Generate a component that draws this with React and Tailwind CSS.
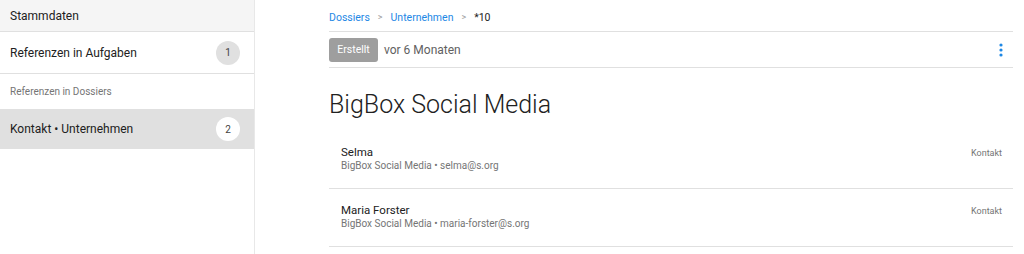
import React from 'react'

const navItems = [
  { label: 'Stammdaten', kind: 'head' },
  { label: 'Referenzen in Aufgaben', badge: '1' },
  { label: 'Referenzen in Dossiers', kind: 'small' },
  { label: 'Kontakt • Unternehmen', badge: '2', active: true },
]

const contacts = [
  { name: 'Selma', sub: 'BigBox Social Media • selma@s.org' },
  { name: 'Maria Forster', sub: 'BigBox Social Media • maria-forster@s.org' },
]

function NavRow({ label, kind, badge, active }) {
  if (kind === 'head') {
    return (
      <div className="h-[32px] flex items-center px-[10px] bg-[#f5f5f5] border-b border-[#e0e0e0] text-[12px] text-[#212121]">
        {label}
      </div>
    )
  }
  if (kind === 'small') {
    return (
      <div className="h-[35px] flex items-center px-[10px] text-[10px] text-[#757575]">
        {label}
      </div>
    )
  }
  return (
    <div
      className={
        'flex items-center justify-between pl-[10px] pr-[14px] text-[12px] text-[#212121] ' +
        (active ? 'h-[40px] bg-[#e0e0e0]' : 'h-[42px] bg-white border-b border-[#e0e0e0]')
      }
    >
      <span>{label}</span>
      <span
        className={
          'w-[24px] h-[24px] rounded-full flex items-center justify-center text-[10px] text-[#424242] ' +
          (active ? 'bg-white' : 'bg-[#e0e0e0]')
        }
      >
        {badge}
      </span>
    </div>
  )
}

export default function App() {
  return (
    <div className="w-[1024px] h-[254px] flex bg-white overflow-hidden" style={{ fontFamily: 'Roboto, "Liberation Sans", sans-serif' }}>
      <aside className="w-[255px] h-full border-r border-[#e8e8e8] flex-shrink-0">
        {navItems.map((item) => (
          <NavRow key={item.label} {...item} />
        ))}
      </aside>

      <main className="flex-1 pl-[74px] pr-[11px]">
        {/* Breadcrumb */}
        <div className="h-[32px] pt-[5px] flex items-center gap-[7px] text-[10.5px] border-b border-[#e0e0e0]">
          <span className="text-[#1e88e5]">Dossiers</span>
          <span className="text-[#9e9e9e] text-[9px] px-[1px]">&gt;</span>
          <span className="text-[#1e88e5]">Unternehmen</span>
          <span className="text-[#9e9e9e] text-[9px] px-[1px]">&gt;</span>
          <span className="text-[#212121]">*10</span>
        </div>

        <div className="h-[36px] flex items-center justify-between border-b border-[#e0e0e0]">
          <div className="flex items-center gap-[6px]">
            <span className="h-[24px] w-[49px] flex items-center justify-center rounded-[3px] bg-[#9e9e9e] text-white text-[10.5px]">Erstellt</span>
            <span className="text-[12px] text-[#616161]">vor 6 Monaten</span>
          </div>
          <svg width="4" height="14" viewBox="0 0 4 14" className="mr-[10px]">
            <circle cx="2" cy="2" r="1.6" fill="#1e88e5" />
            <circle cx="2" cy="7" r="1.6" fill="#1e88e5" />
            <circle cx="2" cy="12" r="1.6" fill="#1e88e5" />
          </svg>
        </div>

        <h1 className="pt-[21px] pb-[10px] text-[25px] font-light text-[#212121] leading-[32px]">BigBox Social Media</h1>

        {contacts.map((c) => (
          <div key={c.name} className="h-[58px] flex justify-between pl-[12px] pr-[11px] pt-[14px] border-b border-[#e0e0e0]">
            <div>
              <div className="text-[11.5px] text-[#212121] leading-[14px]">{c.name}</div>
              <div className="text-[10px] text-[#757575] leading-[14px]">{c.sub}</div>
            </div>
            <div className="text-[9px] text-[#757575] pt-[2px]">Kontakt</div>
          </div>
        ))}
      </main>
    </div>
  )
}
